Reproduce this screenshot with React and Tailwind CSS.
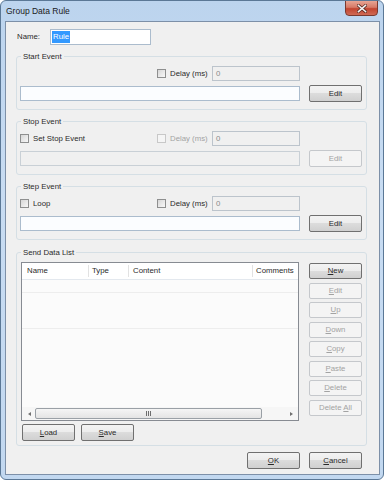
import React from "react";

function Btn({ children, disabled, className = "" }) {
  return (
    <div
      className={`flex items-center justify-center rounded-[2px] border text-[7.8px] leading-none ${
        disabled
          ? "border-[#c5c8cc] bg-[#f4f4f4] text-[#a3a3a3]"
          : "border-[#707070] bg-[linear-gradient(#f3f3f3_0%,#ececec_50%,#dcdcdc_50%,#d0d0d0_100%)] text-[#2a2a2a]"
      } ${className}`}
    >
      {children}
    </div>
  );
}

function Check({ disabled }) {
  return (
    <div
      className={`h-[9px] w-[9px] border ${
        disabled
          ? "border-[#c8c8c8] bg-[#f5f5f5]"
          : "border-[#8e8f8f] bg-[linear-gradient(135deg,#d6d6d6,#f8f8f8)]"
      }`}
    />
  );
}

function DelayBox({ disabled }) {
  return (
    <div className="flex items-center">
      <div className="flex w-[55px] items-center">
        <Check disabled={disabled} />
        <span className={`ml-[4px] text-[7.8px] leading-none ${disabled ? "text-[#a3a3a3]" : "text-[#2a2a2a]"}`}>
          Delay (ms)
        </span>
      </div>
      <div className="flex h-[15px] w-[88px] items-center border border-[#bcc4cc] bg-[#f0f0f0] pl-[3px] text-[7.8px] leading-none text-[#8a8a8a]">
        0
      </div>
    </div>
  );
}

function Group({ title, children, className = "" }) {
  return (
    <div className={`relative ml-[10px] w-[351px] rounded-[3px] border border-[#d5dfe5] ${className}`}>
      <span className="absolute -top-[5px] left-[4px] bg-[#f0f0f0] px-[2px] text-[7.8px] leading-[9px] text-[#2a2a2a]">
        {title}
      </span>
      {children}
    </div>
  );
}

function EventGroup({ title, leftCheck, leftLabel, delayDisabled, boxDisabled, editDisabled, className }) {
  return (
    <Group title={title} className={className}>
      <div className="flex flex-col pb-[7px] pl-[3px] pr-[4px] pt-[9px]">
        <div className="flex h-[15px] items-center">
          <div className="flex w-[137px] items-center">
            {leftCheck && (
              <>
                <Check />
                <span className="ml-[4px] text-[7.8px] leading-none text-[#2a2a2a]">{leftLabel}</span>
              </>
            )}
          </div>
          <DelayBox disabled={delayDisabled} />
        </div>
        <div className="mt-[4px] flex h-[17px] items-center">
          <div
            className={`h-[15px] w-[280px] border ${
              boxDisabled ? "border-[#c9d0d6] bg-[#f0f0f0]" : "border-[#abbccd] bg-[#fbfdff]"
            }`}
          />
          <Btn disabled={editDisabled} className="ml-[9px] h-[17px] w-[53px]">
            Edit
          </Btn>
        </div>
      </div>
    </Group>
  );
}

export default function App() {
  return (
    <div className="flex h-[480px] w-[384px] flex-col overflow-hidden rounded-[6px] border border-[#5b7896] bg-[linear-gradient(180deg,#bcd4ee_0%,#c8dcf2_40%,#c2d8f0_100%)] font-['Liberation_Sans',Arial,sans-serif]">
      {/* title bar */}
      <div className="flex h-[20px] shrink-0 items-start justify-between pl-[5px] pr-[5px]">
        <span className="mt-[5px] text-[8.5px] leading-[10px] text-[#1a1a1a]">Group Data Rule</span>
        <div className="-mt-[1px] flex h-[16px] w-[33px] items-center justify-center rounded-b-[4px] border border-[#7a3a30] bg-[linear-gradient(180deg,#e8a594_0%,#d77a67_45%,#c2442f_55%,#cf6a55_100%)]">
          <svg width="10" height="9" viewBox="0 0 10 9">
            <path d="M1.5 1.5 L8.5 7.5 M8.5 1.5 L1.5 7.5" stroke="#5a2a22" strokeWidth="3" strokeLinecap="square" />
            <path d="M1.5 1.5 L8.5 7.5 M8.5 1.5 L1.5 7.5" stroke="#f4f4f4" strokeWidth="1.6" strokeLinecap="square" />
          </svg>
        </div>
      </div>

      {/* client */}
      <div className="ml-[4px] mr-[3px] flex h-[454px] shrink-0 flex-col border border-[#7d90a8] bg-[#f0f0f0]">
        {/* Name */}
        <div className="ml-[11px] mt-[7px] flex h-[16px] items-center">
          <span className="w-[33px] text-[7.8px] leading-none text-[#2a2a2a]">Name:</span>
          <div className="flex h-[16px] w-[101px] items-center border border-[#abbccd] bg-white pl-[1px]">
            <span className="bg-[#3399ff] px-[1px] py-[2px] text-[7.8px] leading-none text-white">Rule</span>
          </div>
        </div>

        <EventGroup title="Start Event" className="mt-[11px]" />
        <EventGroup
          title="Stop Event"
          className="mt-[11px]"
          leftCheck
          leftLabel="Set Stop Event"
          delayDisabled
          boxDisabled
          editDisabled
        />
        <EventGroup title="Step Event" className="mt-[11px]" leftCheck leftLabel="Loop" />

        {/* Send Data List */}
        <Group title="Send Data List" className="mt-[12px]">
          <div className="flex flex-col pb-[4px] pl-[4px] pr-[4px] pt-[9px]">
            <div className="flex">
              <div className="flex h-[159px] w-[278px] flex-col border border-[#878b92] bg-[#fbfbfb]">
                <div className="flex h-[17px] shrink-0 border-b border-[#e3e8ee] bg-white text-[7.8px] leading-none text-[#2a2a2a]">
                  <div className="flex w-[66px] items-center pl-[5px]">Name</div>
                  <div className="my-[2px] w-px bg-[#e2e2e2]" />
                  <div className="flex w-[39px] items-center pl-[3px]">Type</div>
                  <div className="my-[2px] w-px bg-[#e2e2e2]" />
                  <div className="flex w-[123px] items-center pl-[4px]">Content</div>
                  <div className="my-[2px] w-px bg-[#e2e2e2]" />
                  <div className="flex flex-1 items-center pl-[3px]">Comments</div>
                </div>
                <div className="flex flex-1 flex-col">
                  <div className="h-[13px] border-b border-[#ededed]" />
                  <div className="h-[36px] border-b border-[#ededed]" />
                </div>
                {/* horizontal scrollbar */}
                <div className="flex h-[13px] shrink-0 items-center bg-[#f6f6f6] px-[1px]">
                  <div className="flex w-[12px] items-center justify-center">
                    <div className="h-0 w-0 border-y-[2.5px] border-r-[3px] border-y-transparent border-r-[#707070]" />
                  </div>
                  <div className="flex h-[11px] w-[227px] items-center justify-center rounded-[2px] border border-[#9aa0a6] bg-[linear-gradient(180deg,#f5f5f5,#e4e4e4)]">
                    <div className="flex gap-[1px]">
                      <div className="h-[5px] w-px bg-[#6e6e6e]" />
                      <div className="h-[5px] w-px bg-[#6e6e6e]" />
                      <div className="h-[5px] w-px bg-[#6e6e6e]" />
                    </div>
                  </div>
                  <div className="flex-1" />
                  <div className="flex w-[12px] items-center justify-center">
                    <div className="h-0 w-0 border-y-[2.5px] border-l-[3px] border-y-transparent border-l-[#707070]" />
                  </div>
                </div>
              </div>
              <div className="ml-[10px] mt-[1px] flex flex-col gap-[3.5px]">
                <Btn className="h-[16px] w-[53px]"><span><u>N</u>ew</span></Btn>
                <Btn disabled className="h-[16px] w-[53px]"><span><u>E</u>dit</span></Btn>
                <Btn disabled className="h-[16px] w-[53px]"><span><u>U</u>p</span></Btn>
                <Btn disabled className="h-[16px] w-[53px]"><span><u>D</u>own</span></Btn>
                <Btn disabled className="h-[16px] w-[53px]"><span><u>C</u>opy</span></Btn>
                <Btn disabled className="h-[16px] w-[53px]"><span><u>P</u>aste</span></Btn>
                <Btn disabled className="h-[16px] w-[53px]"><span><u>D</u>elete</span></Btn>
                <Btn disabled className="h-[16px] w-[53px]"><span>Delete <u>A</u>ll</span></Btn>
              </div>
            </div>
            <div className="ml-[1px] mt-[3px] flex gap-[6px]">
              <Btn className="h-[17px] w-[53px]"><span><u>L</u>oad</span></Btn>
              <Btn className="h-[17px] w-[53px]"><span><u>S</u>ave</span></Btn>
            </div>
          </div>
        </Group>

        <div className="mt-[6px] flex justify-end gap-[9px] pr-[17px]">
          <Btn className="h-[17px] w-[53px]"><span><u>O</u>K</span></Btn>
          <Btn className="h-[17px] w-[53px]"><span><u>C</u>ancel</span></Btn>
        </div>
      </div>
    </div>
  );
}
